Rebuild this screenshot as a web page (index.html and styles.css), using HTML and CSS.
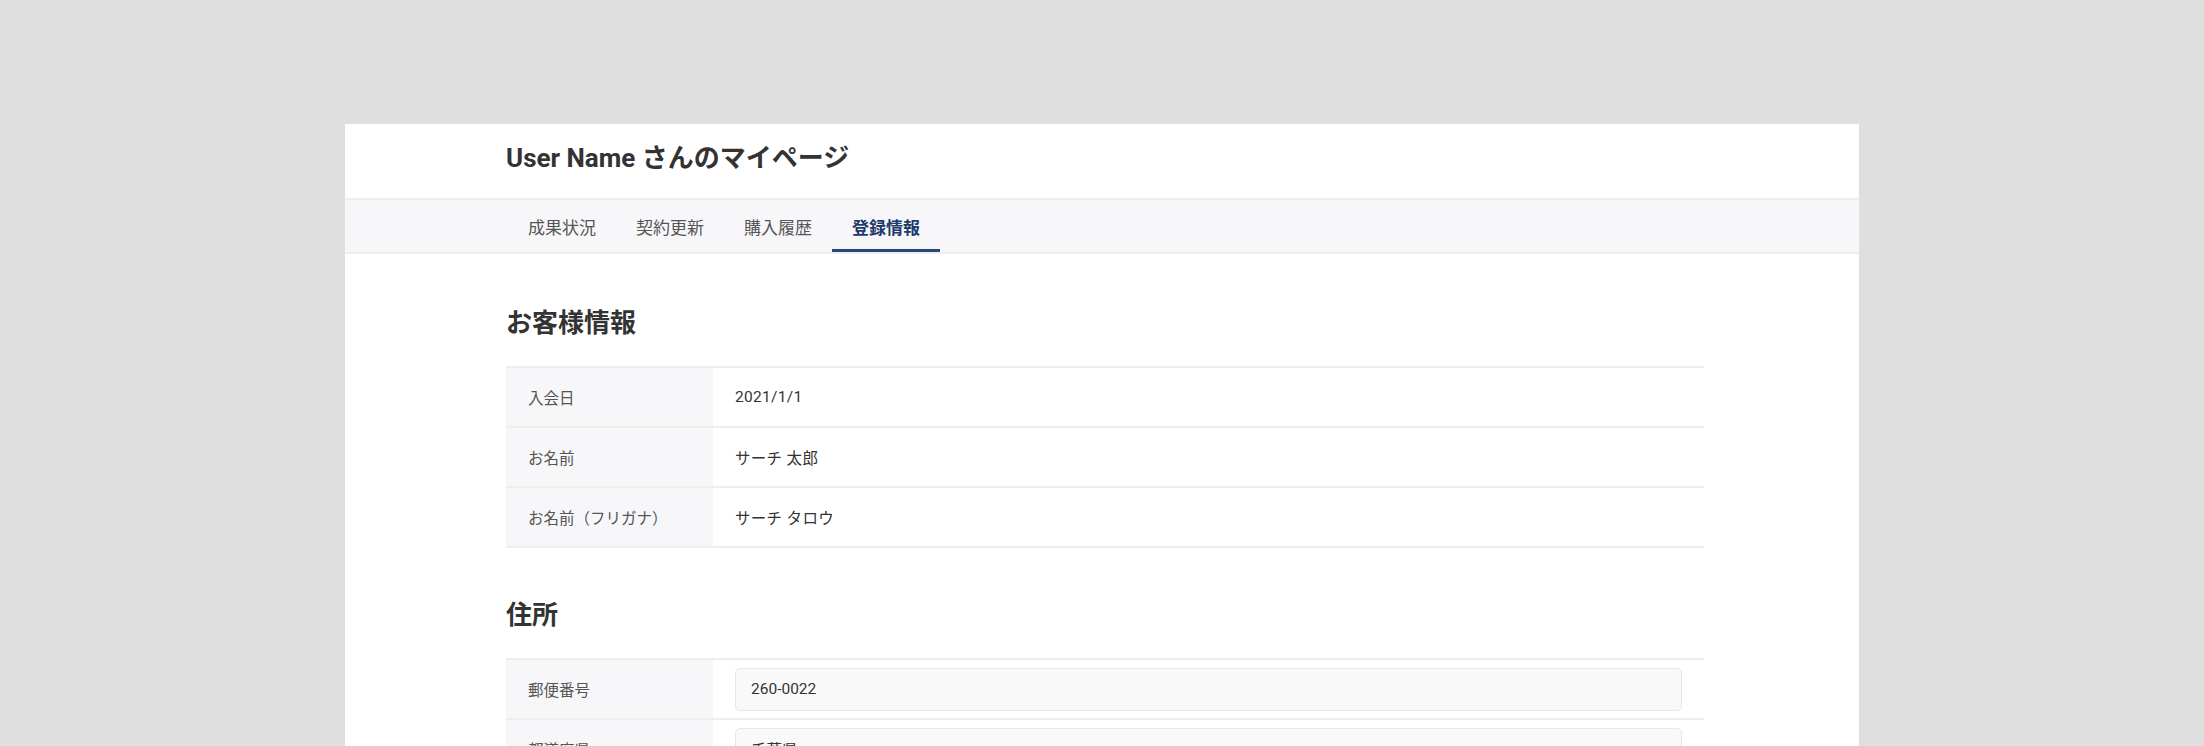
FILE: index.html
```html
<!DOCTYPE html>
<html lang="ja">
<head>
<meta charset="utf-8">
<title>マイページ</title>
<link rel="stylesheet" href="styles.css">
</head>
<body>
<div class="card">
  <header class="page-header">
    <div class="inner">
      <h1 class="page-title">User Name さんのマイページ</h1>
    </div>
  </header>
  <nav class="tabbar">
    <div class="inner tabs">
      <a class="tab">成果状況</a>
      <a class="tab">契約更新</a>
      <a class="tab">購入履歴</a>
      <a class="tab active">登録情報</a>
    </div>
  </nav>
  <main class="inner content">
    <section class="section">
      <h2 class="section-title">お客様情報</h2>
      <div class="info-table">
        <div class="row"><div class="label">入会日</div><div class="value">2021/1/1</div></div>
        <div class="row"><div class="label">お名前</div><div class="value">サーチ 太郎</div></div>
        <div class="row"><div class="label">お名前（フリガナ）</div><div class="value">サーチ タロウ</div></div>
      </div>
    </section>
    <section class="section">
      <h2 class="section-title">住所</h2>
      <div class="info-table">
        <div class="row"><div class="label">郵便番号</div><div class="value"><input class="field" type="text" value="260-0022" readonly></div></div>
        <div class="row"><div class="label">都道府県</div><div class="value"><input class="field" type="text" value="千葉県" readonly></div></div>
        <div class="row"><div class="label">市区町村</div><div class="value"><input class="field" type="text" value="千葉市中央区" readonly></div></div>
      </div>
    </section>
  </main>
</div>
</body>
</html>
```

FILE: styles.css
```css
* { box-sizing: border-box; }

html, body {
  margin: 0;
  padding: 0;
}

body {
  background: #dfdfdf;
  font-family: Roboto, "Noto Sans CJK JP", sans-serif;
  color: #333;
}

.card {
  width: 1514px;
  margin: 124px auto 0;
  background: #ffffff;
  min-height: 800px;
}

.inner {
  width: 1198px;
  margin-left: 161px;
}

.page-header {
  height: 74px;
  padding-top: 16px;
}

.page-title {
  margin: 0;
  font-size: 26px;
  line-height: 36px;
  font-weight: 700;
  color: #333;
}

.tabbar {
  background: #f7f7f9;
  border-top: 2px solid #eeeef0;
  border-bottom: 2px solid #eeeef0;
}

.tabs {
  display: flex;
  height: 52px;
  padding-left: 2px;
}

.tab {
  display: flex;
  align-items: center;
  padding: 3px 20px 0;
  height: 52px;
  font-size: 17px;
  color: #555;
  border-bottom: 3px solid transparent;
  margin-bottom: -1px;
}

.tab.active {
  color: #1e3a6c;
  font-weight: 700;
  border-bottom-color: #2a4677;
}

.content {
  padding-top: 51px;
}

.section + .section {
  margin-top: 49px;
}

.section-title {
  margin: 0 0 25px;
  font-size: 26px;
  line-height: 36px;
  font-weight: 700;
  color: #333;
}

.info-table {
  border-top: 2px solid #eeeeee;
}

.row {
  display: grid;
  grid-template-columns: 207px 1fr;
  border-bottom: 2px solid #eeeeee;
}

.label {
  background: #f7f7f9;
  height: 58px;
  display: flex;
  align-items: center;
  padding-left: 22px;
  font-size: 15.5px;
  color: #555;
}

.value {
  height: 58px;
  display: flex;
  align-items: center;
  padding: 0 22px;
  font-size: 15.5px;
  color: #333;
  letter-spacing: 0.02em;
}

.field {
  width: 100%;
  height: 43px;
  border: 1px solid #e6e6e6;
  border-radius: 5px;
  background: #f9f9f9;
  padding: 0 15px;
  font-family: Roboto, "Noto Sans CJK JP", sans-serif;
  font-size: 15.5px;
  color: #333;
  outline: none;
}
```
